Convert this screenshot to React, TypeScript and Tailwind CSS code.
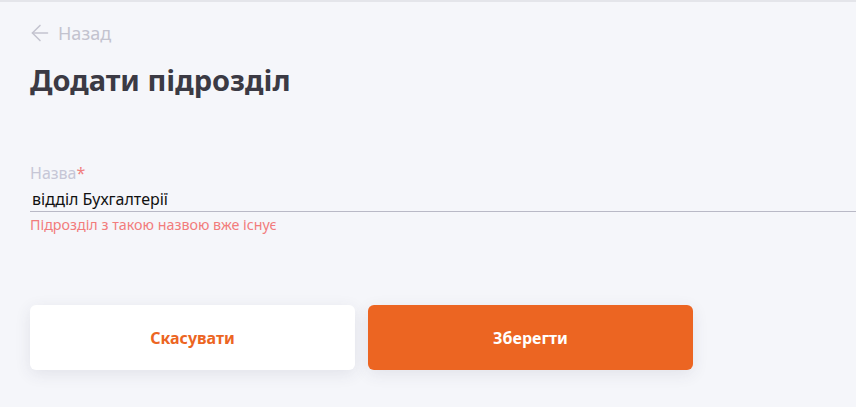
import { ArrowLeft } from 'lucide-react';

export default function App() {
  return (
    <div
      className="w-[856px] h-[407px] bg-[#f5f6fa] border-t-2 border-[#e4e5ea] overflow-hidden"
      style={{ fontFamily: '"Noto Sans", "Open Sans", sans-serif' }}
    >
      <div className="pl-[30px]">
        <button className="mt-[18px] flex items-center gap-[5px] text-[#c3c3cf] text-[18px] leading-[24px]">
          <ArrowLeft size={26} strokeWidth={1.4} className="-ml-[3px]" />
          <span>Назад</span>
        </button>

        <h1 className="mt-[16px] text-[29px] leading-[36px] font-bold text-[#3b3a44]">
          Додати підрозділ
        </h1>

        <div className="mt-[65px]">
          <label className="block text-[16px] leading-[20px] text-[#c6c6d6]">
            Назва<span className="text-[#f08080]">*</span>
          </label>
          <input
            defaultValue="відділ Бухгалтерії"
            className="block w-full mt-[6px] pl-[2px] pb-[2px] bg-transparent text-[16px] leading-[20px] text-[#111] border-b border-[#b9b9c6] outline-none"
          />
          <p className="mt-[4px] text-[14.3px] leading-[18px] text-[#f27c7c]">
            Підрозділ з такою назвою вже існує
          </p>
        </div>

        <div className="mt-[71px] flex gap-[13px]">
          <button className="w-[325px] h-[65px] rounded-[6px] bg-white text-[#ec6522] text-[16px] font-bold shadow-[0_4px_16px_rgba(60,60,90,0.10)]">
            Скасувати
          </button>
          <button className="w-[325px] h-[65px] rounded-[6px] bg-[#ec6522] text-white text-[16px] font-bold shadow-[0_4px_16px_rgba(60,60,90,0.10)]">
            Зберегти
          </button>
        </div>
      </div>
    </div>
  );
}
